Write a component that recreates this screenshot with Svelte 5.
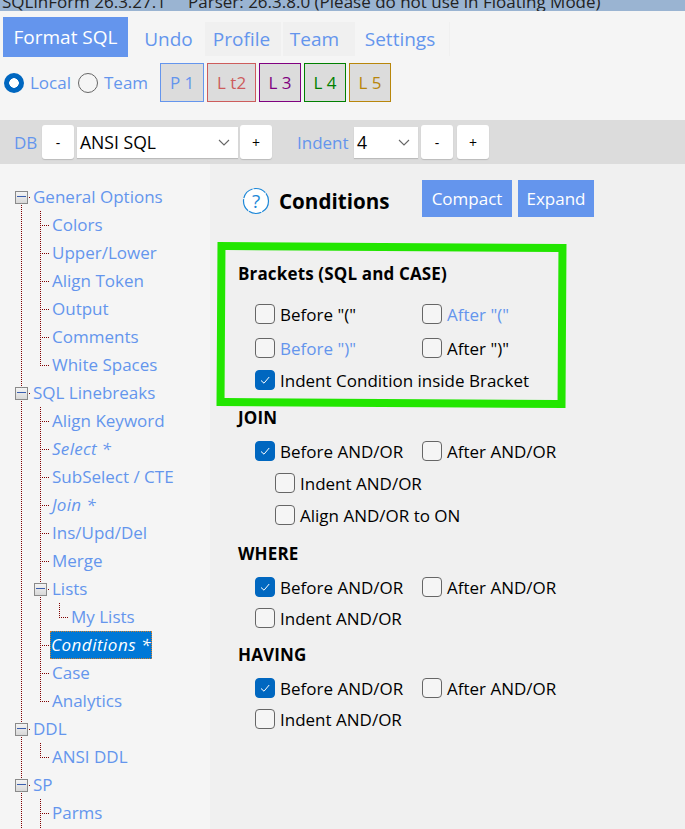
<script>
	const tree = [
		{ label: "General Options", guides: ["top"], box: true },
		{ label: "Colors", guides: ["pipe", "tee"] },
		{ label: "Upper/Lower", guides: ["pipe", "tee"] },
		{ label: "Align Token", guides: ["pipe", "tee"] },
		{ label: "Output", guides: ["pipe", "tee"] },
		{ label: "Comments", guides: ["pipe", "tee"] },
		{ label: "White Spaces", guides: ["pipe", "ell"] },
		{ label: "SQL Linebreaks", guides: ["pipe"], box: true },
		{ label: "Align Keyword", guides: ["pipe", "tee"] },
		{ label: "Select *", guides: ["pipe", "tee"], italic: true },
		{ label: "SubSelect / CTE", guides: ["pipe", "tee"] },
		{ label: "Join *", guides: ["pipe", "tee"], italic: true },
		{ label: "Ins/Upd/Del", guides: ["pipe", "tee"] },
		{ label: "Merge", guides: ["pipe", "tee"] },
		{ label: "Lists", guides: ["pipe", "pipe"], box: true },
		{ label: "My Lists", guides: ["pipe", "pipe", "ell"] },
		{ label: "Conditions *", guides: ["pipe", "tee"], italic: true, selected: true },
		{ label: "Case", guides: ["pipe", "tee"] },
		{ label: "Analytics", guides: ["pipe", "ell"] },
		{ label: "DDL", guides: ["pipe"], box: true },
		{ label: "ANSI DDL", guides: ["pipe", "ell"] },
		{ label: "SP", guides: ["pipe"], box: true },
		{ label: "Parms", guides: ["pipe", "tee"] },
		{ label: "", guides: ["pipe", "tee"] }
	];

	const profiles = [
		{ label: "P 1", cls: "p1" },
		{ label: "L t2", cls: "p2" },
		{ label: "L 3", cls: "p3" },
		{ label: "L 4", cls: "p4" },
		{ label: "L 5", cls: "p5" }
	];

	const groups = [
		{ title: "JOIN", rows: [
			{ items: [{ label: "Before AND/OR", checked: true }, { label: "After AND/OR" }] },
			{ indent: true, items: [{ label: "Indent AND/OR" }] },
			{ indent: true, items: [{ label: "Align AND/OR to ON" }] }
		] },
		{ title: "WHERE", rows: [
			{ items: [{ label: "Before AND/OR", checked: true }, { label: "After AND/OR" }] },
			{ items: [{ label: "Indent AND/OR" }] }
		] },
		{ title: "HAVING", rows: [
			{ items: [{ label: "Before AND/OR", checked: true }, { label: "After AND/OR" }] },
			{ items: [{ label: "Indent AND/OR" }] }
		] }
	];
</script>

{#snippet check(item)}
	<label class="check" class:changed={item.changed}>
		<input type="checkbox" checked={item.checked} />
		<span class="tick">
			{#if item.checked}
				<svg width="12" height="12" viewBox="0 0 12 12"><path d="M2 6.5 L5 9.2 L10.2 3" fill="none" stroke="#fff" stroke-width="1"/></svg>
			{/if}
		</span>
		<span>{item.label}</span>
	</label>
{/snippet}

<div class="page">
	<div class="title">SQLinForm 26.3.27.1 &nbsp;&nbsp;&nbsp; Parser: 26.3.8.0 (Please do not use in Floating Mode)</div>

	<div class="toolbar">
		<div class="tabs">
			<button class="primary">Format SQL</button>
			<button class="tab undo">Undo</button>
			<button class="tab profile">Profile</button>
			<button class="tab team">Team</button>
			<button class="tab settings">Settings</button>
		</div>
		<div class="scope">
			<span class="radio on"></span><span class="link local">Local</span>
			<span class="radio"></span><span class="link">Team</span>
			<div class="profiles">
				{#each profiles as p}
					<button class="profile-btn {p.cls}">{p.label}</button>
				{/each}
			</div>
		</div>
	</div>

	<div class="dbrow">
		<span class="link db">DB</span>
		<button class="small">-</button>
		<div class="select wide"><span>ANSI SQL</span><svg width="12" height="7" viewBox="0 0 12 7"><path d="M1 1 L6 6 L11 1" fill="none" stroke="#666" stroke-width="1.1"/></svg></div>
		<button class="small">+</button>
		<span class="link indent">Indent</span>
		<div class="select narrow"><span>4</span><svg width="12" height="7" viewBox="0 0 12 7"><path d="M1 1 L6 6 L11 1" fill="none" stroke="#666" stroke-width="1.1"/></svg></div>
		<button class="small">-</button>
		<button class="small">+</button>
	</div>

	<div class="body">
		<nav class="tree">
			{#each tree as node}
				<div class="node">
					{#each node.guides as g, i}
						<span class="guide {g}">
							{#if node.box && i === node.guides.length - 1}
								<span class="box"></span>
							{/if}
						</span>
					{/each}
					<span class="name" class:italic={node.italic} class:selected={node.selected}>{node.label}</span>
				</div>
			{/each}
		</nav>

		<main class="content">
			<div class="head">
				<svg class="help" width="28" height="28" viewBox="0 0 28 28">
					<circle cx="14" cy="14" r="12.5" fill="#fff" stroke="#1e88d8" stroke-width="1.2" stroke-dasharray="13 1"/>
					<text x="14" y="20.5" text-anchor="middle" class="qmark">?</text>
				</svg>
				<h1>Conditions</h1>
				<button class="primary compact">Compact</button>
				<button class="primary expand">Expand</button>
			</div>

			<section class="boxed">
				<h2>Brackets (SQL and CASE)</h2>
				<div class="pair first">
					{@render check({ label: 'Before "("' })}
					{@render check({ label: 'After "("', changed: true })}
				</div>
				<div class="pair">
					{@render check({ label: 'Before ")"', changed: true })}
					{@render check({ label: 'After ")"' })}
				</div>
				<div class="line last">
					{@render check({ label: "Indent Condition inside Bracket", checked: true })}
				</div>
			</section>

			{#each groups as group}
				<section class="group">
					<h2>{group.title}</h2>
					{#each group.rows as row}
						<div class="line" class:indented={row.indent}>
							{#each row.items as item}
								{@render check(item)}
							{/each}
						</div>
					{/each}
				</section>
			{/each}
		</main>
	</div>
</div>

<style>
	:global(body) {
		margin: 0;
		background: #f5f5f5;
	}

	.page {
		width: 685px;
		height: 829px;
		overflow: hidden;
		display: flex;
		flex-direction: column;
		font-family: "Open Sans", "Noto Sans", sans-serif;
		font-size: 17px;
		color: #000;
	}

	button {
		font: inherit;
		border: none;
		padding: 0;
	}

	.title {
		height: 11px;
		flex: none;
		background: #9ab4d2;
		line-height: 3px;
		font-size: 17px;
		white-space: pre;
		overflow: hidden;
		padding-left: 2px;
		color: #222;
	}

	.toolbar {
		height: 109px;
		flex: none;
		background: #f5f5f5;
		box-sizing: border-box;
		padding: 6px 0 0 3px;
	}

	.tabs {
		display: flex;
		align-items: center;
		height: 40px;
	}

	.primary {
		background: #6495ed;
		color: #fff;
	}

	.tabs .primary {
		width: 125px;
		height: 40px;
		font-size: 19px;
	}

	.tab {
		height: 34px;
		margin-top: 3px;
		background: #f5f5f5;
		color: #6495ed;
		font-size: 19px;
	}

	.undo {
		width: 77px;
		padding-left: 4px;
	}

	.profile {
		width: 76px;
		padding-right: 3px;
		background: #f0f0f0;
	}

	.team {
		width: 72px;
		margin-left: 2px;
		padding-right: 9px;
		background: #f0f0f0;
	}

	.settings {
		width: 94px;
		margin-left: 1px;
		padding-right: 5px;
		border-right: 1px solid #f0f0f0;
	}

	.scope {
		display: flex;
		align-items: center;
		margin-top: 6px;
		padding-left: 1px;
		height: 39px;
	}

	.link {
		color: #6495ed;
	}

	.radio {
		width: 18px;
		height: 18px;
		border: 1px solid #666;
		border-radius: 50%;
		margin-right: 6px;
		flex: none;
	}

	.radio.on {
		width: 20px;
		height: 20px;
		border: none;
		background: radial-gradient(circle, #fff 0 4.5px, #0067c0 5px);
	}

	.local {
		margin-right: 8px;
		width: 40px;
	}

	.profiles {
		display: flex;
		gap: 3px;
		margin-left: 12px;
	}

	.profile-btn {
		height: 39px;
		box-sizing: border-box;
		background: #dcdcdc;
		border: 1px solid;
		width: 42px;
		font-size: 17px;
	}

	.p1 { color: #6495ed; width: 44px; }
	.p2 { color: #cd5c5c; width: 49px; }
	.p3 { color: #800080; }
	.p4 { color: #008000; }
	.p5 { color: #b8860b; }

	.dbrow {
		height: 44px;
		flex: none;
		background: #dcdcdc;
		display: flex;
		align-items: center;
		padding-left: 14px;
		box-sizing: border-box;
	}

	.db {
		width: 28px;
	}

	.small {
		width: 32px;
		height: 34px;
		background: #fff;
		border-radius: 3px;
		box-shadow: 0 1px 1px #bbb;
		font-size: 14px;
	}

	.select {
		height: 31px;
		background: #fff;
		display: flex;
		align-items: center;
		justify-content: space-between;
		box-sizing: border-box;
		padding: 0 8px 0 3px;
		box-shadow: 0 1px 1px #bbb;
		font-size: 17.6px;
	}

	.wide {
		width: 161px;
		margin: 0 2px 0 3px;
	}

	.indent {
		margin-left: 25px;
		width: 57px;
	}

	.narrow {
		width: 64px;
		margin-right: 3px;
	}

	.narrow + .small {
		margin-right: 4px;
	}

	.body {
		flex: 1;
		display: flex;
		min-height: 0;
	}

	.tree {
		width: 210px;
		flex: none;
		background: #f5f5f5;
		padding: 19px 0 0 12px;
		box-sizing: border-box;
	}

	.node {
		height: 28px;
		display: flex;
		align-items: center;
	}

	.guide {
		width: 19px;
		height: 28px;
		flex: none;
		position: relative;
	}

	.guide::before {
		content: "";
		position: absolute;
		left: 9px;
		top: 0;
		bottom: 0;
		width: 1px;
		background: repeating-linear-gradient(to bottom, #800000 0 1px, transparent 1px 2px);
	}

	.guide::after {
		content: "";
		position: absolute;
		left: 10px;
		width: 9px;
		top: 14px;
		height: 1px;
		background: repeating-linear-gradient(to right, transparent 0 1px, #800000 1px 2px);
	}

	.guide.pipe::after {
		display: none;
	}

	.guide.pipe:has(.box)::after,
	.guide.top::after {
		display: block;
	}

	.guide.top::before {
		top: 14px;
	}

	.guide.ell::before {
		bottom: 13px;
	}

	.box {
		position: absolute;
		left: 3px;
		top: 8px;
		width: 13px;
		height: 13px;
		box-sizing: border-box;
		border: 1px solid #8a8a8a;
		background: linear-gradient(#f4f4f4, #d8d8d8);
		z-index: 1;
	}

	.box::after {
		content: "";
		position: absolute;
		left: 1px;
		right: 1px;
		top: 4px;
		border-top: 1px solid #3a5fb0;
	}

	.name {
		color: #6495ed;
		margin-left: 2px;
		white-space: nowrap;
		line-height: 24px;
	}

	.italic {
		font-style: italic;
		letter-spacing: 0.3px;
	}

	.selected {
		background: #0078d7;
		color: #fff;
		outline: 1px dotted #d08030;
		outline-offset: -1px;
		padding: 1px 1px;
		margin-left: 0;
		line-height: 26px;
		letter-spacing: 0.5px;
	}

	.content {
		flex: 1;
		background: #f0f0f0;
		padding: 16px 0 0 7px;
	}

	.head {
		display: flex;
		align-items: center;
		height: 37px;
		padding-left: 25px;
	}

	.help {
		flex: none;
		margin-top: 4px;
	}

	.qmark {
		font-size: 19px;
		fill: #1e88d8;
	}

	h1 {
		font-size: 20.6px;
		font-weight: 700;
		margin: 5px 0 0 9px;
		width: 143px;
		line-height: 37px;
	}

	.compact {
		width: 90px;
		height: 37px;
	}

	.expand {
		width: 76px;
		height: 37px;
		margin-left: 6px;
	}

	h2 {
		font-size: 17px;
		font-weight: 700;
		margin: 0;
		line-height: 24px;
		letter-spacing: 0.15px;
	}

	.boxed {
		position: relative;
		width: 349px;
		height: 164px;
		box-sizing: border-box;
		margin-top: 26px;
		padding: 19px 0 0 21px;
	}

	/* hand drawn marker over the panel, slightly tilted */
	.boxed::before {
		content: "";
		position: absolute;
		inset: 0;
		border: 8px solid #22e600;
		transform: rotate(0.35deg);
		pointer-events: none;
	}

	.pair {
		display: grid;
		grid-template-columns: 167px auto;
		padding-left: 17px;
		height: 34px;
		align-items: center;
	}

	.pair.first {
		margin-top: 11px;
	}

	.line {
		display: grid;
		grid-template-columns: 167px auto;
		padding-left: 38px;
		height: 32px;
		align-items: center;
	}

	.line + .line:not(.indented) {
		margin-top: -1px;
	}

	.boxed .line {
		padding-left: 17px;
		grid-template-columns: auto;
		margin-top: -1px;
	}

	.line.indented {
		padding-left: 58px;
	}

	.group h2 {
		margin: 0 0 5px 21px;
	}

	.group {
		margin-top: 11px;
	}

	.boxed + .group {
		margin-top: -1px;
	}

	.group:last-child {
		margin-top: 9px;
	}

	.check {
		display: inline-flex;
		align-items: center;
		position: relative;
		gap: 5px;
		white-space: nowrap;
	}

	.check input {
		appearance: none;
		margin: 0;
		width: 20px;
		height: 20px;
		border: 1px solid #666;
		border-radius: 4px;
		box-sizing: border-box;
		background: #f5f5f5;
		flex: none;
	}

	.check input:checked {
		background: #0067c0;
		border-color: #0067c0;
	}

	.tick {
		position: absolute;
		left: 4px;
		top: 50%;
		margin-top: -6px;
		width: 12px;
		height: 12px;
		line-height: 0;
	}

	.changed {
		color: #6495ed;
	}
</style>
